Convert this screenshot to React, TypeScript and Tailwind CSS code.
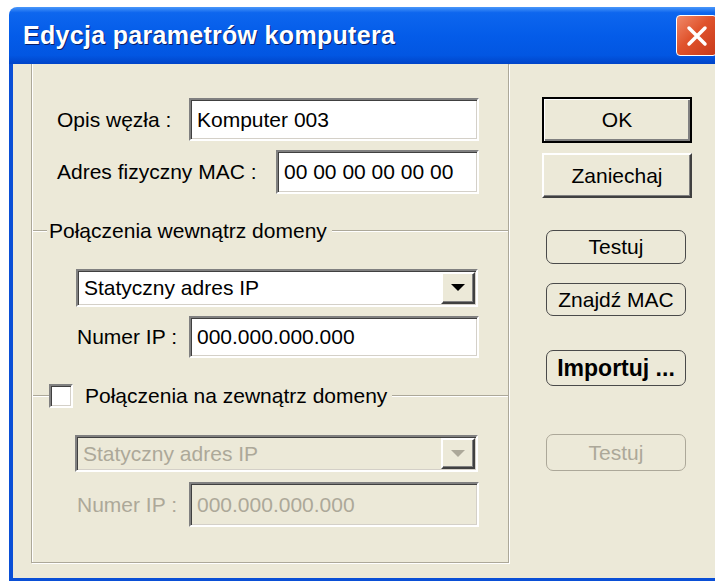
import React from 'react';

const font = "font-['Liberation_Sans',Arial,sans-serif]";

// sunken edit field, classic 3D look
const Field: React.FC<{ value: string; width: string; height: string; disabled?: boolean }> = ({ value, width, height, disabled }) => (
  <div
    className={`${width} ${height} flex items-center pl-[6px] border-2 border-t-[#808080] border-l-[#808080] border-b-white border-r-white shadow-[inset_1px_1px_0_#404040,inset_-1px_-1px_0_#d4d0c8] ${
      disabled ? 'bg-[#ece9d8] text-[#aca899]' : 'bg-white text-black'
    }`}
  >
    {value}
  </div>
);

const Combo: React.FC<{ value: string; height: string; disabled?: boolean }> = ({ value, height, disabled }) => (
  <div
    className={`${height} flex items-stretch border-2 border-t-[#808080] border-l-[#808080] border-b-white border-r-white shadow-[inset_1px_1px_0_#404040,inset_-1px_-1px_0_#d4d0c8] ${
      disabled ? 'bg-[#ece9d8] text-[#aca899]' : 'bg-white text-black'
    }`}
  >
    <div className="flex-1 flex items-center pl-[6px]">{value}</div>
    <div className="w-[34px] m-[1px] flex items-center justify-center bg-[#ece9d8] border-2 border-t-white border-l-white border-b-[#404040] border-r-[#404040] shadow-[inset_-1px_-1px_0_#808080]">
      <svg width="14" height="8" viewBox="0 0 14 8">
        <polygon points="0,0 14,0 7,7" fill={disabled ? '#aca899' : '#000'} />
      </svg>
    </div>
  </div>
);

const Etch: React.FC<{ className?: string }> = ({ className = '' }) => (
  <div className={`h-0 border-t border-t-[#aca899] border-b border-b-white ${className}`} />
);

const RoundButton: React.FC<{ label: string; className?: string; bold?: boolean; disabled?: boolean }> = ({ label, className = '', bold, disabled }) => (
  <div
    className={`w-[140px] ml-[4px] flex items-center justify-center rounded-[7px] border ${
      disabled ? 'border-[#aca899] text-[#aca899]' : 'border-[#4a4a4a] text-black'
    } ${bold ? 'font-bold text-[23px]' : ''} ${className}`}
  >
    {label}
  </div>
);

export default function App() {
  return (
    <div className={`w-[715px] h-[581px] overflow-hidden bg-white ${font} text-[21px]`}>
      <div className="ml-[9px] mt-[7px] w-[720px] h-[574px] flex flex-col rounded-t-[8px] overflow-hidden">
        {/* title bar */}
        <div className="h-[57px] flex items-center pl-[14px] bg-[linear-gradient(to_bottom,#4a97fa_0%,#0d66ee_10%,#045ce9_50%,#0256e2_85%,#0044c8_100%)]">
          <span className="text-white font-bold text-[25px] tracking-[0.3px] [text-shadow:1px_1px_0_#0a1f6a]">
            Edycja parametrów komputera
          </span>
          <div className="ml-auto mr-[12px] w-[41px] h-[41px] rounded-[4px] border border-white bg-[linear-gradient(135deg,#f08a6a_0%,#e0532c_45%,#c8391a_100%)] flex items-center justify-center">
            <svg width="24" height="24" viewBox="0 0 24 24">
              <path d="M4 4 L20 20 M20 4 L4 20" stroke="#fff" strokeWidth="3.5" strokeLinecap="round" />
            </svg>
          </div>
        </div>

        {/* client area */}
        <div className="flex-1 flex bg-[#ece9d8] border-l-4 border-b-[3px] border-[#0a4fd6] pl-[18px]">
          <div className="w-[478px] h-[499px] flex flex-col border-l border-r border-b border-[#aca899] shadow-[inset_1px_0_0_#fff,1px_1px_0_#fff]">
            <div className="mt-[34px] h-[43px] flex items-center justify-between pl-[25px] pr-[29px]">
              <span>Opis węzła :</span>
              <Field value="Komputer 003" width="w-[290px]" height="h-[43px]" />
            </div>
            <div className="mt-[9px] h-[44px] flex items-center justify-between pl-[25px] pr-[29px]">
              <span>Adres fizyczny MAC :</span>
              <Field value="00 00 00 00 00 00" width="w-[203px]" height="h-[44px]" />
            </div>

            {/* inside the domain */}
            <div className="mt-[25px] h-[24px] flex items-center">
              <Etch className="w-[14px] ml-[1px]" />
              <span className="ml-[2px] mr-[5px]">Połączenia wewnątrz domeny</span>
              <Etch className="flex-1" />
            </div>
            <div className="mt-[26px] ml-[44px] mr-[30px]">
              <Combo value="Statyczny adres IP" height="h-[38px]" />
            </div>
            <div className="mt-[9px] h-[42px] flex items-center justify-between pl-[45px] pr-[29px]">
              <span>Numer IP :</span>
              <Field value="000.000.000.000" width="w-[290px]" height="h-[42px]" />
            </div>

            {/* outside the domain */}
            <div className="mt-[26px] h-[24px] flex items-center">
              <Etch className="w-[16px] ml-[1px]" />
              <div className="w-[24px] h-[24px] bg-white border-2 border-t-[#808080] border-l-[#808080] border-b-white border-r-white shadow-[inset_1px_1px_0_#404040,inset_-1px_-1px_0_#d4d0c8]" />
              <span className="ml-[12px] mr-[5px]">Połączenia na zewnątrz domeny</span>
              <Etch className="flex-1" />
            </div>
            <div className="mt-[27px] ml-[43px] mr-[30px]">
              <Combo value="Statyczny adres IP" height="h-[37px]" disabled />
            </div>
            <div className="mt-[10px] h-[45px] flex items-center justify-between pl-[45px] pr-[29px] text-[#aca899]">
              <span>Numer IP :</span>
              <Field value="000.000.000.000" width="w-[290px]" height="h-[45px]" disabled />
            </div>
          </div>

          {/* buttons */}
          <div className="ml-[33px] flex flex-col items-start">
            <div className="mt-[33px] w-[150px] h-[46px] flex items-center justify-center border-2 border-black shadow-[inset_1px_1px_0_#fff,inset_-2px_-2px_0_#808080]">
              OK
            </div>
            <div className="mt-[10px] w-[150px] h-[45px] flex items-center justify-center border-2 border-t-white border-l-white border-b-[#404040] border-r-[#404040] shadow-[inset_-1px_-1px_0_#808080]">
              Zaniechaj
            </div>
            <RoundButton label="Testuj" className="mt-[32px] h-[34px]" />
            <RoundButton label="Znajdź MAC" className="mt-[19px] h-[33px]" />
            <RoundButton label="Importuj ..." className="mt-[34px] h-[36px]" bold />
            <RoundButton label="Testuj" className="mt-[48px] h-[37px]" disabled />
          </div>
        </div>
      </div>
    </div>
  );
}
